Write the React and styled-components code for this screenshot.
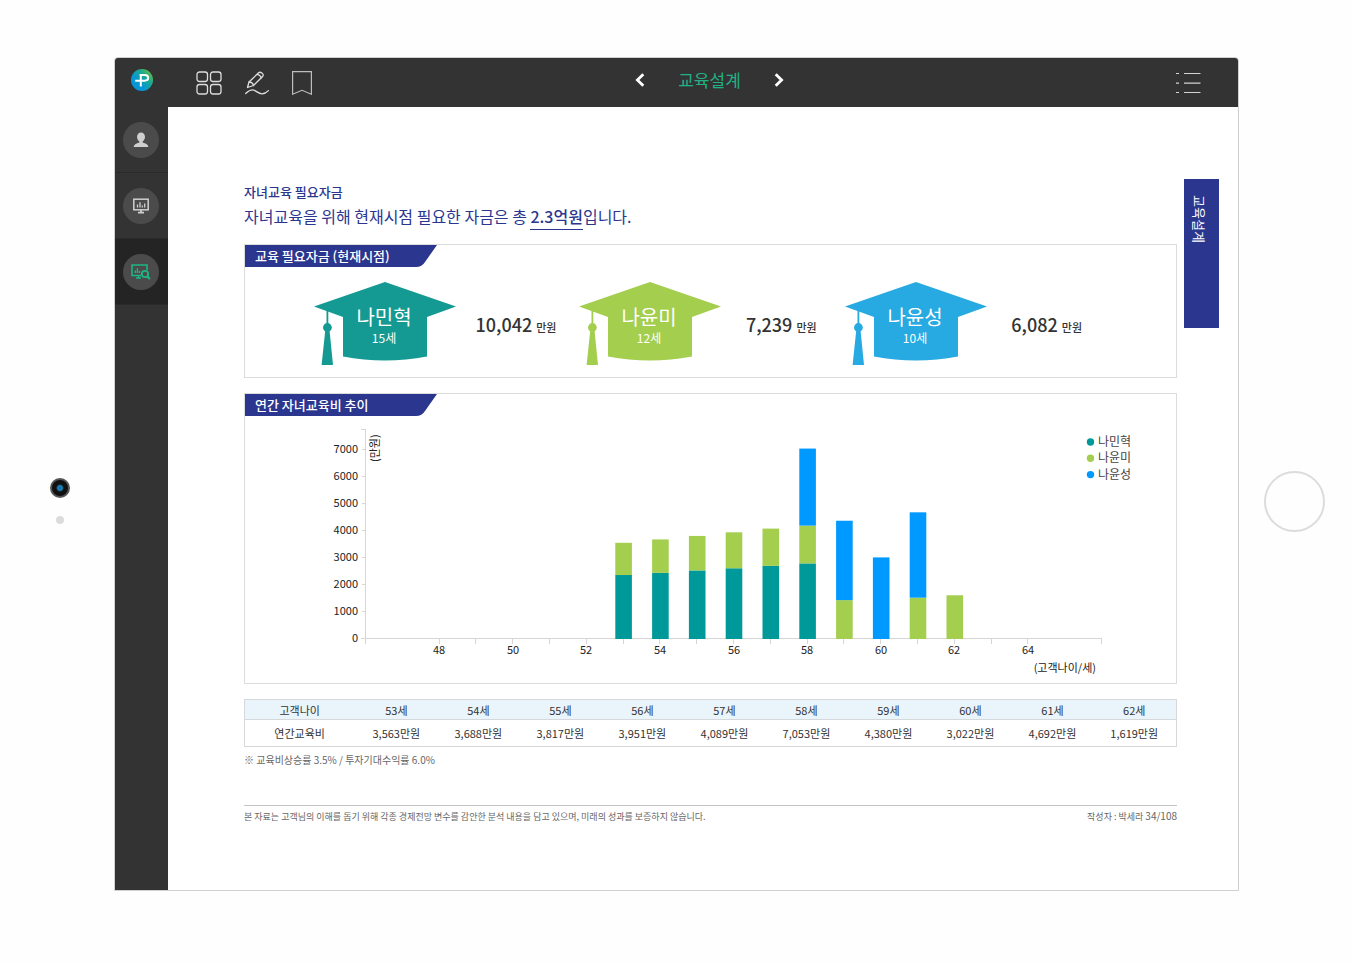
import React from "react";
import styled, { createGlobalStyle } from "styled-components";

const children = [
  { name: "나민혁", age: "15세", amount: "10,042", hat: "#149a92", bar: "#009999" },
  { name: "나윤미", age: "12세", amount: "7,239", hat: "#a4ce4e", bar: "#a4ce4e" },
  { name: "나윤성", age: "10세", amount: "6,082", hat: "#27a9e1", bar: "#0099ff" },
];

// yearly cost per child, in the order of the list above
const yearly = [
  { age: 53, costs: [2370, 1193, 0], total: "3,563" },
  { age: 54, costs: [2450, 1238, 0], total: "3,688" },
  { age: 55, costs: [2540, 1277, 0], total: "3,817" },
  { age: 56, costs: [2620, 1331, 0], total: "3,951" },
  { age: 57, costs: [2710, 1379, 0], total: "4,089" },
  { age: 58, costs: [2800, 1400, 2853], total: "7,053" },
  { age: 59, costs: [0, 1440, 2940], total: "4,380" },
  { age: 60, costs: [0, 0, 3022], total: "3,022" },
  { age: 61, costs: [0, 1530, 3162], total: "4,692" },
  { age: 62, costs: [0, 1619, 0], total: "1,619" },
];

export default function App() {
  return (
    <>
      <GlobalStyle />
      <Device>
        <Bezel>
          <Camera />
          <Sensor />
        </Bezel>
        <Screen>
          <TopBar />
          <Body>
            <SideMenu />
            <Paper>
              <Report />
              <ChapterTab href="#education">교육설계</ChapterTab>
            </Paper>
          </Body>
        </Screen>
        <Bezel $end>
          <HomeButton aria-label="홈" />
        </Bezel>
      </Device>
    </>
  );
}

function TopBar() {
  return (
    <Header>
      <LogoLink href="#home" aria-label="홈으로">
        <Logo />
      </LogoLink>
      <Tools>
        <IconButton aria-label="전체보기">
          <svg width="26" height="24" viewBox="0 0 26 24" fill="none" stroke="#dcdcdc" strokeWidth="1.3">
            <rect x="1" y="1" width="10.5" height="9.5" rx="2.5" />
            <rect x="14.5" y="1" width="10.5" height="9.5" rx="2.5" />
            <rect x="1" y="13.5" width="10.5" height="9.5" rx="2.5" />
            <rect x="14.5" y="13.5" width="10.5" height="9.5" rx="2.5" />
          </svg>
        </IconButton>
        <IconButton aria-label="펜">
          <svg width="24" height="24" viewBox="0 0 24 24" fill="none" stroke="#dcdcdc" strokeWidth="1.3" strokeLinejoin="round" strokeLinecap="round">
            <path d="M2.5 16.5L4 11L13.6 1.8C15.4 .2 19.2 2.8 17.8 5.2L8.5 14.5L2.5 16.5Z" />
            <path d="M4 11C6 11 8 12.5 8.5 14.5M12.2 3.3C14 3.7 15.8 5.2 16.2 6.9" />
            <path d="M.7 22.5C4 19.5 6.5 18 9.5 19.3C12.5 20.8 13.5 22.8 17 22.8C19.8 22.8 21.8 21.3 23.4 19.6" />
          </svg>
        </IconButton>
        <IconButton aria-label="책갈피">
          <svg width="20" height="24" viewBox="0 0 20 24" fill="none" stroke="#bdbdbd" strokeWidth="1.2">
            <path d="M.6 .6H19.4V23.2L10 19.3L.6 23.2Z" />
          </svg>
        </IconButton>
      </Tools>
      <Pager>
        <IconButton aria-label="이전">
          <svg width="10" height="14" viewBox="0 0 10 14" fill="none" stroke="#fff" strokeWidth="2.8">
            <path d="M8.3 1.2L2.4 7L8.3 12.8" />
          </svg>
        </IconButton>
        <PageTitle>교육설계</PageTitle>
        <IconButton aria-label="다음">
          <svg width="10" height="14" viewBox="0 0 10 14" fill="none" stroke="#fff" strokeWidth="2.8">
            <path d="M1.7 1.2L7.6 7L1.7 12.8" />
          </svg>
        </IconButton>
      </Pager>
      <Tools $end>
        <IconButton aria-label="목차">
          <svg width="26" height="22" viewBox="0 0 26 22" stroke="#d2d2d2" strokeWidth="1.2">
            <path d="M1 1.5H4M9 1.5H25.5M1 11.2H4M9 11.2H25.5M1 20.5H4M9 20.5H25.5" />
          </svg>
        </IconButton>
      </Tools>
    </Header>
  );
}

function Logo() {
  return (
    <svg width="22" height="22" viewBox="0 0 22 22">
      <defs>
        <linearGradient id="logo" x1="0.1" y1="0.8" x2="0.9" y2="0.1">
          <stop offset="0.25" stopColor="#0695d6" />
          <stop offset="0.65" stopColor="#19a796" />
          <stop offset="1" stopColor="#63bd45" />
        </linearGradient>
      </defs>
      <circle cx="11" cy="11" r="11" fill="url(#logo)" />
      <path d="M4.2 11.7H13.6C18.4 11.7 18.4 6 13.6 6H8.6M9.8 6V17.4" fill="none" stroke="#fff" strokeWidth="2" />
    </svg>
  );
}

function SideMenu() {
  return (
    <Sidebar>
      <SideItem aria-label="고객정보">
        <Round>
          <svg width="16" height="16" viewBox="0 0 16 16" fill="#cfcfcf">
            <ellipse cx="8" cy="5" rx="4" ry="4.6" />
            <path d="M6.3 8H9.7V10.5C12.5 11.3 15 12.2 15.4 15H.6C1 12.2 3.5 11.3 6.3 10.5Z" />
          </svg>
        </Round>
      </SideItem>
      <SideItem aria-label="현황">
        <Round>
          <svg width="16" height="16" viewBox="0 0 16 16" fill="none" stroke="#cfcfcf">
            <rect x="0.8" y="1.2" width="14.4" height="10.6" strokeWidth="1.5" />
            <path d="M4.5 9.5V6.5M7 9.5V4.2M9.3 9.5V7.6M11.7 9.5V5.6" strokeWidth="1.3" />
            <path d="M8 12V14.2M5 14.6H11" strokeWidth="1.7" />
          </svg>
        </Round>
      </SideItem>
      <SideItem aria-label="분석" aria-current="page" $active>
        <Round>
          <svg width="20" height="16" viewBox="0 0 20 16" fill="none" stroke="#1fb585">
            <path d="M10 11.5H1V1H16V6" strokeWidth="1.6" />
            <path d="M4.3 9V6.5M6.4 9V4.2M8.5 9V7M5 14H10M7.5 12V14" strokeWidth="1.4" />
            <circle cx="14" cy="10" r="3.2" strokeWidth="1.8" />
            <path d="M16.2 12.2L18.8 15" strokeWidth="2.2" />
          </svg>
        </Round>
      </SideItem>
    </Sidebar>
  );
}

function Report() {
  return (
    <Main>
      <Title>자녀교육 필요자금</Title>
      <Lead>
        자녀교육을 위해 현재시점 필요한 자금은 총 <strong>2.3억원</strong>입니다.
      </Lead>

      <Card>
        <CardTitle>교육 필요자금 (현재시점)</CardTitle>
        <Funds>
          {children.map((child) => (
            <Fund key={child.name}>
              <Hat child={child} />
              <Amount>
                {child.amount} <small>만원</small>
              </Amount>
            </Fund>
          ))}
        </Funds>
      </Card>

      <Card>
        <CardTitle>연간 자녀교육비 추이</CardTitle>
        <Chart />
      </Card>

      <Table>
        <thead>
          <tr>
            <th scope="row">고객나이</th>
            {yearly.map((y) => (
              <th key={y.age} scope="col">{y.age}세</th>
            ))}
          </tr>
        </thead>
        <tbody>
          <tr>
            <th scope="row">연간교육비</th>
            {yearly.map((y) => (
              <td key={y.age}>{y.total}만원</td>
            ))}
          </tr>
        </tbody>
      </Table>
      <Note>※ 교육비상승률 3.5% / 투자기대수익률 6.0%</Note>

      <Footer>
        <span>
          본 자료는 고객님의 이해를 돕기 위해 각종 경제전망 변수를 감안한 분석 내용을 담고 있으며, 미래의 성과를 보증하지 않습니다.
        </span>
        <Author>
          작성자 : 박세라 <PageNumber>34/108</PageNumber>
        </Author>
      </Footer>
    </Main>
  );
}

function Hat({ child }) {
  return (
    <svg width="142" height="83" viewBox="0 0 142 83" fill={child.hat}>
      <path d="M71 0L142 24.5L113 35V74.5Q71 82.5 29 74.5V35L0 24.5Z" />
      <path d="M12.5 28H14.3V42H12.5Z" />
      <circle cx="13.4" cy="45.5" r="4.4" />
      <path d="M11.3 48H15.5L19 83H7.6Z" />
      <HatName x="70" y="43">{child.name}</HatName>
      <HatAge x="70" y="61">{child.age}</HatAge>
    </svg>
  );
}

// plot geometry, in chart units
const left = 121;
const base = 223;
const step = 36.8;
const unit = 0.027;
const xOf = (age) => left + (age - 46) * step;

function Chart() {
  const marks = [46];
  for (let age = 48; age <= 64; age++) marks.push(age);
  marks.push(66);

  return (
    <ChartSvg viewBox="0 0 931 267" role="img" aria-label="연간 자녀교육비 추이">
      <g stroke="#d6d6d6" strokeWidth="1" fill="none">
        <path d={`M${left - 5} 13.5H${left}M${left - 0.5} 13V${base + 5}M${left - 5} ${base - 0.5}H${xOf(66)}`} />
        {[1, 2, 3, 4, 5, 6, 7].map((n) => (
          <path key={n} d={`M${left - 4} ${Math.round(base - n * 1000 * unit) - 0.5}h4`} />
        ))}
        {marks.map((age) => (
          <path key={age} d={`M${Math.round(xOf(age)) - 0.5} ${base}v5`} />
        ))}
      </g>
      {[0, 1, 2, 3, 4, 5, 6, 7].map((n) => (
        <AxisText key={n} x="113" y={Math.floor(base - n * 1000 * unit) + 3} textAnchor="end">
          {n * 1000}
        </AxisText>
      ))}
      {[48, 50, 52, 54, 56, 58, 60, 62, 64].map((age) => (
        <AxisText key={age} x={Math.floor(xOf(age))} y="238" textAnchor="middle">
          {age}
        </AxisText>
      ))}
      <AxisText transform="translate(134 46) rotate(-90)">(만원)</AxisText>
      <AxisText x="851" y="256" textAnchor="end">(고객나이/세)</AxisText>

      {yearly.map((y) => {
        let bottom = base;
        return y.costs.map((cost, i) => {
          const height = cost * unit;
          bottom -= height;
          return (
            <rect
              key={`${y.age}-${i}`}
              x={xOf(y.age) - 8.3}
              y={bottom}
              width="16.6"
              height={height}
              fill={children[i].bar}
            />
          );
        });
      })}

      {children.map((child, i) => (
        <g key={child.name}>
          <circle cx="845.5" cy={26 + i * 16.3} r="3.7" fill={child.bar} />
          <LegendText x="853" y={30 + i * 16.3}>{child.name}</LegendText>
        </g>
      ))}
    </ChartSvg>
  );
}

const GlobalStyle = createGlobalStyle`
  * {
    box-sizing: border-box;
  }

  body {
    margin: 0;
    background: #fefefe;
    color: #333;
    font-family: "Noto Sans CJK KR", "Noto Sans", sans-serif;
  }

  button {
    padding: 0;
    border: 0;
    background: none;
    font: inherit;
    cursor: pointer;
  }

  svg {
    display: block;
  }
`;

const Device = styled.div`
  display: grid;
  grid-template-columns: 114px minmax(0, 1fr) 113px;
  min-height: 100vh;
  padding: 57px 0 71px;
`;

const Bezel = styled.div`
  display: flex;
  flex-direction: column;
  align-items: center;
  justify-content: center;
  gap: 18px;
  padding: ${(props) => (props.$end ? "54px 3px 0 0" : "54px 0 0 6px")};
`;

const Camera = styled.div`
  width: 20px;
  height: 20px;
  border: 2px solid #555;
  border-radius: 50%;
  background: radial-gradient(circle, #1b6fa0 1px, #1b8fd0 2px, #111 4px);
`;

const Sensor = styled.div`
  width: 8px;
  height: 8px;
  border-radius: 50%;
  background: #dcdcdc;
`;

const HomeButton = styled.button`
  width: 61px;
  height: 61px;

  && {
    border: 2px solid #dcdcdc;
    border-radius: 50%;
  }
`;

const Screen = styled.div`
  display: flex;
  flex-direction: column;
  border: 1px solid #d0d0d0;
  border-radius: 4px 4px 0 0;
  background: #fff;
  overflow: hidden;
`;

const Header = styled.header`
  display: grid;
  grid-template-columns: 53px 1fr auto 1fr;
  height: 49px;
  padding-right: 37px;
  background: #333;
`;

const LogoLink = styled.a`
  display: flex;
  justify-content: center;
  padding-top: 11px;
`;

const Tools = styled.div`
  display: flex;
  align-items: center;
  justify-content: ${(props) => (props.$end ? "flex-end" : "flex-start")};
  gap: 23px;
  padding-top: 1px;
  padding-left: ${(props) => (props.$end ? "0" : "28px")};
`;

const IconButton = styled.button`
  display: flex;
`;

const Pager = styled.nav`
  display: flex;
  align-items: center;
  gap: 33px;
  padding: 0 0 6px 50px;
`;

const PageTitle = styled.h1`
  margin: 0;
  color: #22b183;
  font-size: 17px;
  font-weight: 400;
  line-height: 24px;
`;

const Body = styled.div`
  display: flex;
  flex: 1;
`;

const Sidebar = styled.nav`
  flex: none;
  width: 53px;
  background: #333;
`;

const SideItem = styled.button`
  display: flex;
  align-items: center;
  justify-content: center;
  width: 100%;
  height: 66px;

  && {
    padding-right: 1px;
    border-bottom: 1px solid #2a2a2a;
    background: ${(props) => (props.$active ? "#242424" : "#333")};
  }
`;

const Round = styled.span`
  display: flex;
  align-items: center;
  justify-content: center;
  width: 36px;
  height: 36px;
  border-radius: 50%;
  background: #4b4b4b;
`;

const Paper = styled.div`
  display: flex;
  flex: 1;
  min-width: 0;
  align-items: flex-start;
  gap: 7px;
  padding: 72px 19px 64px 76px;
`;

const ChapterTab = styled.a`
  flex: none;
  width: 35px;
  height: 149px;
  padding: 16px 12px 0 0;
  background: #2b368f;
  color: #fff;
  font-size: 13px;
  line-height: 16px;
  text-decoration: none;
  writing-mode: vertical-rl;
  text-orientation: sideways;
`;

const Main = styled.main`
  flex: 1;
  min-width: 0;
`;

const Title = styled.h2`
  margin: 0;
  padding-top: 1px;
  color: #2b368f;
  font-size: 13px;
  font-weight: 500;
  line-height: 24px;
`;

const Lead = styled.p`
  margin: 0 0 16px;
  color: #2b368f;
  font-size: 16px;
  line-height: 24px;

  strong {
    padding-bottom: 1px;
    border-bottom: 1px solid #2b368f;
    font-weight: 500;
  }
`;

const Card = styled.section`
  margin-bottom: 15px;
  border: 1px solid #dcdcdc;
`;

const CardTitle = styled.h3`
  width: 192px;
  height: 22px;
  margin: 0;
  padding-left: 10px;
  background: #2b368f;
  clip-path: path("M0 0H192L180 17Q177 22 171 22H0Z");
  color: #fff;
  font-size: 13px;
  font-weight: 500;
  line-height: 22px;
`;

const Funds = styled.div`
  display: grid;
  grid-template-columns: repeat(3, 1fr);
  padding: 15px 66px 12px 69px;
`;

const Fund = styled.div`
  display: flex;
  align-items: center;
`;

const HatName = styled.text`
  fill: #fff;
  font-size: 20px;
  font-weight: 400;
  text-anchor: middle;
`;

const HatAge = styled.text`
  fill: #fff;
  font-size: 12px;
  font-weight: 400;
  text-anchor: middle;
`;

const Amount = styled.p`
  width: 120px;
  margin: 0;
  padding-top: 3px;
  font-size: 18px;
  font-weight: 500;
  line-height: 24px;
  text-align: center;

  small {
    font-size: 11px;
  }
`;

const ChartSvg = styled.svg`
  width: 100%;
  height: auto;
`;

const AxisText = styled.text`
  fill: #222;
  font-size: 11px;
`;

const LegendText = styled.text`
  fill: #444;
  font-size: 12px;
`;

const Table = styled.table`
  width: 100%;
  border: 1px solid #d6d9db;
  border-collapse: collapse;
  table-layout: fixed;
  font-size: 11px;
  line-height: 16px;
  text-align: center;

  th,
  td {
    padding: 0 2px 0 0;
    font-weight: 400;
  }

  th:first-child {
    width: 12%;
  }

  thead tr {
    height: 20px;
    border-bottom: 1px solid #d6d9db;
    background: #e9f4fb;
  }

  tbody tr {
    height: 27px;
  }
`;

const Note = styled.p`
  margin: 5px 0 37px;
  color: #666;
  font-size: 10px;
  line-height: 16px;
`;

const Footer = styled.footer`
  display: flex;
  justify-content: space-between;
  align-items: baseline;
  padding-top: 2px;
  border-top: 1px solid #c4c4c4;
  color: #666;
  font-size: 9px;
  line-height: 16px;
`;

const Author = styled.span`
  flex: none;
`;

const PageNumber = styled.span`
  font-size: 10px;
`;
